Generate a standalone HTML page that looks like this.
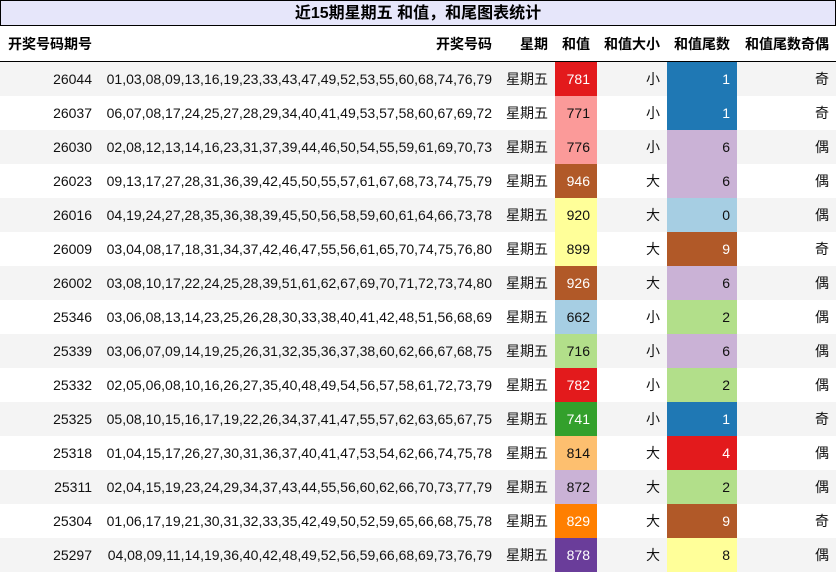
<!DOCTYPE html><html><head><meta charset="utf-8"><style>
body{margin:0;width:836px;height:573px;background:#fff;font-family:"Liberation Sans","Noto Sans CJK SC",sans-serif;overflow:hidden}
.t{position:absolute;left:0;top:0;width:834px;height:24px;border:1px solid #000;background:#e6e6fa;text-align:center;font-weight:bold;font-size:16px;line-height:25px;color:#000}
table{position:absolute;left:0;top:26px;border-collapse:collapse;table-layout:fixed;width:836px;font-size:14px;color:#111}
td,th{padding:0 7px 0 0;text-align:right;white-space:nowrap;height:34px}
th{height:35px;border-bottom:1px solid #000;font-weight:bold;color:#000}
th:first-child{text-align:left;padding-left:8px}
tbody tr:nth-child(odd){background:#f4f4f4}
.w{color:#fff}
</style></head><body>
<div class="t">近15期星期五 和值，和尾图表统计</div>
<table>
<colgroup><col style="width:99px"><col style="width:400px"><col style="width:56px"><col style="width:42px"><col style="width:70px"><col style="width:70px"><col style="width:99px"></colgroup>
<thead><tr><th>开奖号码期号</th><th>开奖号码</th><th>星期</th><th>和值</th><th>和值大小</th><th>和值尾数</th><th>和值尾数奇偶</th></tr></thead>
<tbody>
<tr><td>26044</td><td>01,03,08,09,13,16,19,23,33,43,47,49,52,53,55,60,68,74,76,79</td><td>星期五</td><td class="w" style="background:#e31a1c">781</td><td>小</td><td class="w" style="background:#1f78b4">1</td><td>奇</td></tr>
<tr><td>26037</td><td>06,07,08,17,24,25,27,28,29,34,40,41,49,53,57,58,60,67,69,72</td><td>星期五</td><td style="background:#fb9a99">771</td><td>小</td><td class="w" style="background:#1f78b4">1</td><td>奇</td></tr>
<tr><td>26030</td><td>02,08,12,13,14,16,23,31,37,39,44,46,50,54,55,59,61,69,70,73</td><td>星期五</td><td style="background:#fb9a99">776</td><td>小</td><td style="background:#cab2d6">6</td><td>偶</td></tr>
<tr><td>26023</td><td>09,13,17,27,28,31,36,39,42,45,50,55,57,61,67,68,73,74,75,79</td><td>星期五</td><td class="w" style="background:#b15928">946</td><td>大</td><td style="background:#cab2d6">6</td><td>偶</td></tr>
<tr><td>26016</td><td>04,19,24,27,28,35,36,38,39,45,50,56,58,59,60,61,64,66,73,78</td><td>星期五</td><td style="background:#ffff99">920</td><td>大</td><td style="background:#a6cee3">0</td><td>偶</td></tr>
<tr><td>26009</td><td>03,04,08,17,18,31,34,37,42,46,47,55,56,61,65,70,74,75,76,80</td><td>星期五</td><td style="background:#ffff99">899</td><td>大</td><td class="w" style="background:#b15928">9</td><td>奇</td></tr>
<tr><td>26002</td><td>03,08,10,17,22,24,25,28,39,51,61,62,67,69,70,71,72,73,74,80</td><td>星期五</td><td class="w" style="background:#b15928">926</td><td>大</td><td style="background:#cab2d6">6</td><td>偶</td></tr>
<tr><td>25346</td><td>03,06,08,13,14,23,25,26,28,30,33,38,40,41,42,48,51,56,68,69</td><td>星期五</td><td style="background:#a6cee3">662</td><td>小</td><td style="background:#b2df8a">2</td><td>偶</td></tr>
<tr><td>25339</td><td>03,06,07,09,14,19,25,26,31,32,35,36,37,38,60,62,66,67,68,75</td><td>星期五</td><td style="background:#b2df8a">716</td><td>小</td><td style="background:#cab2d6">6</td><td>偶</td></tr>
<tr><td>25332</td><td>02,05,06,08,10,16,26,27,35,40,48,49,54,56,57,58,61,72,73,79</td><td>星期五</td><td class="w" style="background:#e31a1c">782</td><td>小</td><td style="background:#b2df8a">2</td><td>偶</td></tr>
<tr><td>25325</td><td>05,08,10,15,16,17,19,22,26,34,37,41,47,55,57,62,63,65,67,75</td><td>星期五</td><td class="w" style="background:#33a02c">741</td><td>小</td><td class="w" style="background:#1f78b4">1</td><td>奇</td></tr>
<tr><td>25318</td><td>01,04,15,17,26,27,30,31,36,37,40,41,47,53,54,62,66,74,75,78</td><td>星期五</td><td style="background:#fdbf6f">814</td><td>大</td><td class="w" style="background:#e31a1c">4</td><td>偶</td></tr>
<tr><td>25311</td><td>02,04,15,19,23,24,29,34,37,43,44,55,56,60,62,66,70,73,77,79</td><td>星期五</td><td style="background:#cab2d6">872</td><td>大</td><td style="background:#b2df8a">2</td><td>偶</td></tr>
<tr><td>25304</td><td>01,06,17,19,21,30,31,32,33,35,42,49,50,52,59,65,66,68,75,78</td><td>星期五</td><td class="w" style="background:#ff7f00">829</td><td>大</td><td class="w" style="background:#b15928">9</td><td>奇</td></tr>
<tr><td>25297</td><td>04,08,09,11,14,19,36,40,42,48,49,52,56,59,66,68,69,73,76,79</td><td>星期五</td><td class="w" style="background:#6a3d9a">878</td><td>大</td><td style="background:#ffff99">8</td><td>偶</td></tr>
</tbody></table>
</body></html>
